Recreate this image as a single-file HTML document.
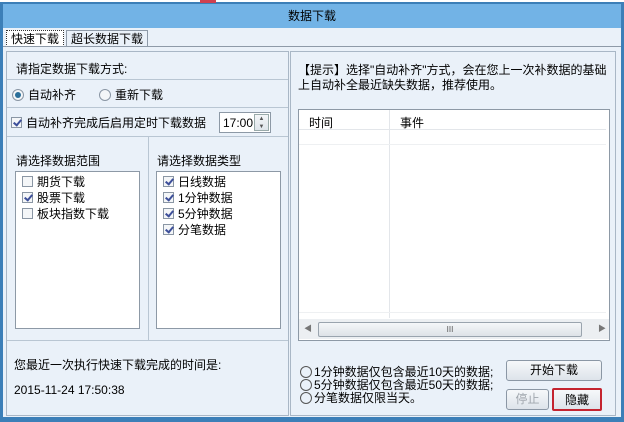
<!DOCTYPE html>
<html><head><meta charset="utf-8"><style>
*{margin:0;padding:0;box-sizing:border-box}
body{width:624px;height:422px;overflow:hidden;background:#fff;font-family:"Liberation Sans","Noto Sans CJK SC","WenQuanYi Zen Hei",sans-serif;font-size:12px;color:#000;position:relative}
.a{position:absolute}
.win{left:0;top:2px;width:624px;height:420px;background:#3c7fb8}
.title{left:3px;top:4px;width:618px;height:24px;background:#72b3e6;text-align:center;line-height:24px;font-size:12px}
.client{left:3px;top:28px;width:618px;height:389px;background:#eaf1f9}
.tab{height:17px;line-height:16px;border:1px solid #8e9aa8;border-bottom:none;background:#eaf1f9;padding:0 4px}
.panel{border:1px solid #a9b7c6}
.line{height:1px;background:#b9c6d3}
.box{background:#fff;border:1px solid #8d99a6}
.cb{display:inline-block;width:11px;height:11px;border:1px solid #8a96a4;background:#f4f6f8;vertical-align:-1px;margin-right:4px;position:relative}
.cb.on::after{content:"";position:absolute;left:3px;top:0px;width:3px;height:6px;border:solid #3d4f9a;border-width:0 2px 2px 0;transform:rotate(40deg)}
.rd{display:inline-block;width:12px;height:12px;border:1px solid #8a96a4;border-radius:50%;background:#f4f6f8;vertical-align:-2px;margin-right:4px;position:relative}
.rd.on::after{content:"";position:absolute;left:2px;top:2px;width:6px;height:6px;border-radius:50%;background:#2b6f9a}
.btn{border:1px solid #8b97a5;border-radius:3px;background:linear-gradient(#f6f8fa,#dde3ea);text-align:center;font-size:12px}
.sm{display:inline-block;width:12px;height:12px;border:1px solid #555;border-radius:50%;vertical-align:-2px;margin-right:2px}
</style></head><body>
<div class="a win"></div>
<div class="a" style="left:200px;top:0;width:16px;height:3px;background:#d04050"></div>
<div class="a title">数据下载</div>
<div class="a client"></div>
<div class="a tab" style="left:6px;top:30px;height:17px;border:1px dotted #333;background:#fff">快速下载</div>
<div class="a tab" style="left:66px;top:30px">超长数据下载</div>
<div class="a" style="left:3px;top:46px;width:618px;height:1px;background:#8e9aa8"></div>

<div class="a panel" style="left:6px;top:51px;width:283px;height:365px"></div>
<div class="a" style="left:16px;top:60px">请指定数据下载方式:</div>
<div class="a line" style="left:7px;top:79px;width:281px"></div>
<div class="a" style="left:12px;top:86px"><span class="rd on"></span>自动补齐</div>
<div class="a" style="left:99px;top:86px"><span class="rd"></span>重新下载</div>
<div class="a line" style="left:7px;top:107px;width:281px"></div>
<div class="a" style="left:11px;top:114px"><span class="cb on"></span>自动补齐完成后启用定时下载数据</div>
<div class="a box" style="left:219px;top:112px;width:52px;height:21px;padding:3px 0 0 3px;font-size:12px">17:00</div>
<div class="a" style="left:254px;top:114px;width:15px;height:17px;border:1px solid #9aa;background:linear-gradient(#f4f6f8,#dfe5eb);font-size:6px;line-height:8px;text-align:center;color:#555">▲<br>▼</div>
<div class="a line" style="left:7px;top:136px;width:281px"></div>
<div class="a line" style="left:148px;top:137px;width:1px;height:203px"></div>
<div class="a line" style="left:7px;top:340px;width:281px"></div>
<div class="a" style="left:16px;top:152px">请选择数据范围</div>
<div class="a" style="left:157px;top:152px">请选择数据类型</div>
<div class="a box" style="left:15px;top:171px;width:125px;height:158px"></div>
<div class="a box" style="left:156px;top:171px;width:125px;height:158px"></div>
<div class="a" style="left:22px;top:174px;line-height:16px"><span class="cb"></span>期货下载<br><span class="cb on"></span>股票下载<br><span class="cb"></span>板块指数下载</div>
<div class="a" style="left:163px;top:174px;line-height:16px"><span class="cb on"></span>日线数据<br><span class="cb on"></span>1分钟数据<br><span class="cb on"></span>5分钟数据<br><span class="cb on"></span>分笔数据</div>
<div class="a" style="left:14px;top:356px">您最近一次执行快速下载完成的时间是:</div>
<div class="a" style="left:14px;top:383px">2015-11-24 17:50:38</div>

<div class="a panel" style="left:290px;top:51px;width:326px;height:365px"></div>
<div class="a" style="left:298px;top:63px;line-height:15px;width:312px">【提示】选择"自动补齐"方式，会在您上一次补数据的基础上自动补全最近缺失数据，推荐使用。</div>
<div class="a box" style="left:298px;top:109px;width:312px;height:232px"></div>
<div class="a" style="left:299px;top:110px;width:307px;height:20px;background:#fff;border-bottom:1px solid #e3e6ea"></div>
<div class="a" style="left:389px;top:110px;width:1px;height:208px;background:#e3e6ea"></div>
<div class="a" style="left:309px;top:114px">时间</div>
<div class="a" style="left:400px;top:114px">事件</div>
<div class="a" style="left:299px;top:144px;width:307px;height:1px;background:#eef0f2"></div>
<div class="a" style="left:299px;top:312px;width:307px;height:1px;background:#eef0f2"></div>
<div class="a" style="left:299px;top:319px;width:310px;height:20px;background:#eceff2"></div>
<div class="a" style="left:318px;top:322px;width:264px;height:15px;border:1px solid #9aa4ae;border-radius:2px;background:linear-gradient(#f5f7f9,#dde2e7);text-align:center;font-size:8px;line-height:13px;color:#555">III</div>
<div class="a" style="left:304px;top:323px;font-size:8px;color:#777">◀</div>
<div class="a" style="left:598px;top:323px;font-size:8px;color:#777">▶</div>
<div class="a" style="left:300px;top:366px;line-height:13px"><span class="sm"></span>1分钟数据仅包含最近10天的数据;<br><span class="sm"></span>5分钟数据仅包含最近50天的数据;<br><span class="sm"></span>分笔数据仅限当天。</div>
<div class="a btn" style="left:506px;top:360px;width:96px;height:21px;line-height:19px">开始下载</div>
<div class="a btn" style="left:506px;top:389px;width:43px;height:21px;line-height:19px;color:#a0a6ad">停止</div>
<div class="a btn" style="left:552px;top:388px;width:50px;height:23px;line-height:21px;border:2px solid #c42430;border-radius:2px">隐藏</div>
</body></html>
